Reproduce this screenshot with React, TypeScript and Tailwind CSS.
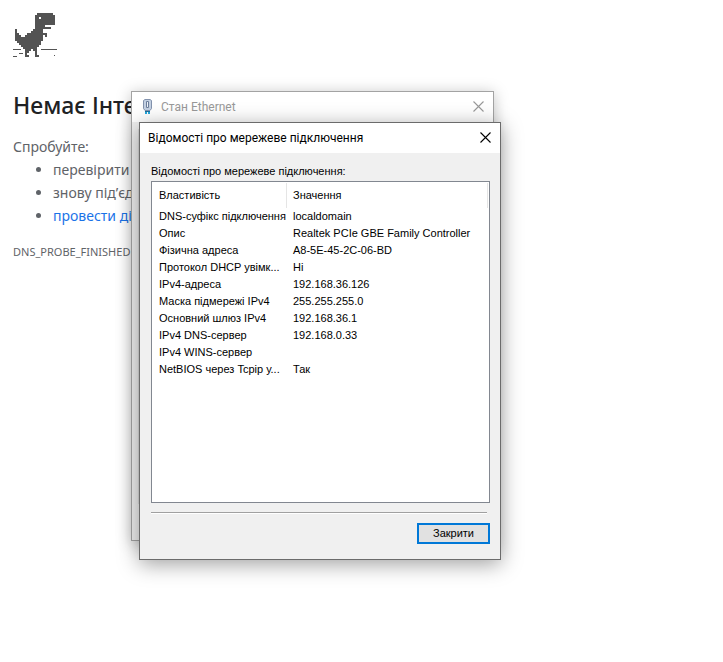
import React from 'react';

const details = [
    { name: 'DNS-суфікс підключення', value: 'localdomain' },
    { name: 'Опис', value: 'Realtek PCIe GBE Family Controller' },
    { name: 'Фізична адреса', value: 'A8-5E-45-2C-06-BD' },
    { name: 'Протокол DHCP увімк...', value: 'Ні' },
    { name: 'IPv4-адреса', value: '192.168.36.126' },
    { name: 'Маска підмережі IPv4', value: '255.255.255.0' },
    { name: 'Основний шлюз IPv4', value: '192.168.36.1' },
    { name: 'IPv4 DNS-сервер', value: '192.168.0.33' },
    { name: 'IPv4 WINS-сервер', value: '' },
    { name: 'NetBIOS через Tcpip у...', value: 'Так' },
];

// [x, y, width, height] in sprite cells, one cell is 2px
const dinoCells = [
    [11, 0, 8, 1], [10, 1, 10, 1], [10, 2, 2, 1], [13, 2, 7, 1], [10, 3, 10, 3],
    [10, 6, 5, 1], [10, 7, 8, 1], [9, 8, 5, 1], [8, 9, 6, 1], [6, 10, 10, 1],
    [5, 11, 9, 1], [15, 11, 1, 1], [0, 8, 1, 2], [0, 10, 2, 1], [0, 11, 3, 1],
    [0, 12, 14, 2], [1, 14, 12, 1], [2, 15, 11, 1], [3, 16, 9, 1], [4, 17, 7, 1],
    [5, 18, 3, 1], [9, 18, 2, 1], [5, 19, 2, 1], [10, 19, 1, 2], [5, 20, 1, 1],
    [5, 21, 2, 1], [10, 21, 2, 1],
];

function Dino() {
    return (
        <svg className="block h-[46px] w-[46px]" viewBox="0 0 46 46" fill="#535353" shapeRendering="crispEdges">
            {dinoCells.map(([x, y, w, h], i) => (
                <rect key={i} x={2 + x * 2} y={y * 2} width={w * 2} height={h * 2} />
            ))}
            <rect x="0" y="36" width="8" height="1" />
            <rect x="28" y="36" width="16" height="1" />
            <rect x="6" y="40" width="4" height="1" />
            <rect x="0" y="43" width="4" height="1" />
            <rect x="41" y="42" width="1" height="1" />
        </svg>
    );
}

function PlugIcon() {
    return (
        <svg className="block h-4 w-4" viewBox="0 0 16 16">
            <path d="M5 12h2v3H5zM8 12h2v3H8z" fill="#22a7dc" />
            <path d="M5 11h5v2H5z" fill="#1b6f9c" />
            <path d="M3.500 1.500 5 .5h5l1.500 1v8L10 11.500H5L3.500 9.500z" fill="#c3d0e2" stroke="#8292ad" />
            <path d="M6.500 2.500h2v6h-2z" fill="#eef3f9" stroke="#6d7e9c" />
        </svg>
    );
}

function CloseIcon() {
    return (
        <svg className="block h-[11px] w-[11px]" viewBox="0 0 11 11" stroke="currentColor" strokeWidth="1.1">
            <path d="M.5.5l10 10M10.500.5l-10 10" />
        </svg>
    );
}

function OfflinePage() {
    return (
        <main className="pl-[13px] pt-[13px] text-sm leading-[23px] text-[#5f6368]">
            <Dino />
            <h1 className="mt-8 text-[23px] leading-7 font-medium text-[#202124]">Немає Інте</h1>
            <p className="mt-4">Спробуйте:</p>
            <ul className="list-disc pl-10">
                <li>перевірити</li>
                <li>знову під’єд</li>
                <li>
                    <a href="#diagnostics" className="text-[#1a73e8]">провести ді</a>
                </li>
            </ul>
            <p className="mt-[17px] text-[11px] leading-4">DNS_PROBE_FINISHED</p>
        </main>
    );
}

function StatusWindow() {
    return (
        <section className="absolute left-[131px] top-[91px] flex h-[450px] w-[363px] flex-col border border-[#a3a3a3] bg-[#f0f0f0] shadow-[0_2px_14px_rgba(0,0,0,0.25)]">
            <header className="flex h-[30px] items-center bg-white pl-2 pr-[9px] text-[#999999]">
                <PlugIcon />
                <h2 className="ml-[5px] flex-1 font-['Roboto',sans-serif] text-xs">Стан Ethernet</h2>
                <button type="button" aria-label="Закрити стан Ethernet" className="pb-px">
                    <CloseIcon />
                </button>
            </header>
            <div className="mx-[6px] mb-9 mt-[7px] flex-1 border border-[#dcdcdc]" />
        </section>
    );
}

function DetailsWindow() {
    return (
        <section
            role="dialog"
            aria-labelledby="details-title"
            className="absolute left-[139px] top-[122px] w-[362px] border border-[#6b6b6b] bg-[#f0f0f0] text-black shadow-[0_4px_20px_rgba(0,0,0,0.38)]"
        >
            <header className="flex h-[30px] items-center bg-white pl-2 pr-[9px]">
                <h2 id="details-title" className="flex-1 font-['Roboto',sans-serif] text-xs">Відомості про мережеве підключення</h2>
                <button type="button" aria-label="Закрити вікно" className="pb-px">
                    <CloseIcon />
                </button>
            </header>
            <div className="px-[11px] pb-[15px] pt-[10px] font-['Liberation_Sans',Arial,sans-serif] text-[11px] leading-[17px]">
                <p id="details-label">Відомості про мережеве підключення:</p>
                <div className="mr-[-1px] mt-px h-[322px] border border-[#828790] bg-white pr-px pt-px">
                    <table aria-labelledby="details-label" className="w-full table-fixed border-separate border-spacing-0 text-left">
                        <thead>
                            <tr className="h-[25px]">
                                <th className="w-[135px] border-r border-[#e5e5e5] pl-[7px] font-normal">Властивість</th>
                                <th className="border-r border-[#e5e5e5] pl-[6px] font-normal">Значення</th>
                            </tr>
                        </thead>
                        <tbody>
                            {details.map((row) => (
                                <tr key={row.name} className="h-[17px]">
                                    <td className="whitespace-nowrap pl-[7px]">{row.name}</td>
                                    <td className="whitespace-nowrap pl-[6px]">{row.value}</td>
                                </tr>
                            ))}
                        </tbody>
                    </table>
                </div>
                <div className="mr-[2px] mt-[9px] h-[2px] border-t border-[#a0a0a0] bg-white" />
                <div className="mr-[-1px] mt-[9px] flex justify-end">
                    <button type="button" className="h-[21px] w-[73px] border-2 border-[#0078d7] bg-[#e1e1e1]">
                        Закрити
                    </button>
                </div>
            </div>
        </section>
    );
}

export default function App() {
    return (
        <div className="relative min-h-screen overflow-hidden bg-white font-['Noto_Sans','Open_Sans',sans-serif]">
            <OfflinePage />
            <StatusWindow />
            <DetailsWindow />
        </div>
    );
}
